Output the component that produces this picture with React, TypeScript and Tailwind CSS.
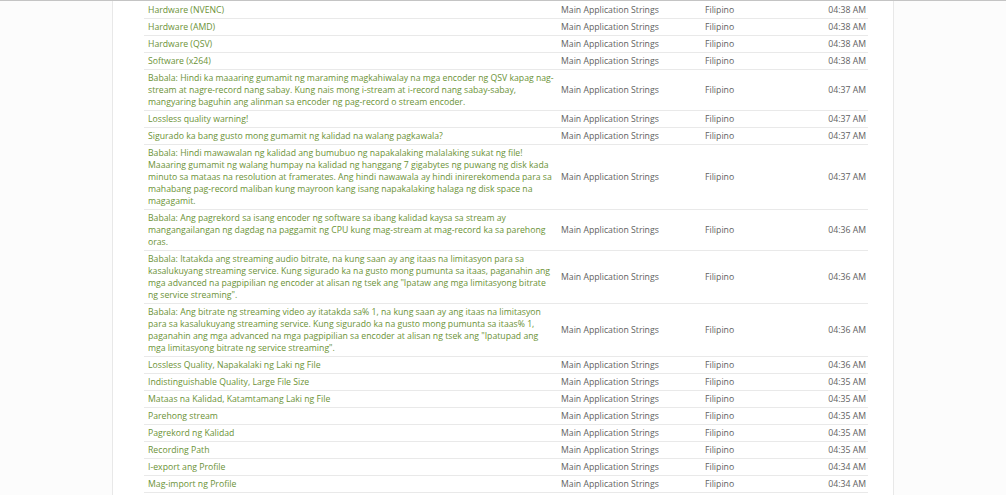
import { FC } from "react";

interface StringRow {
  text: string;
  time: string;
}

const rows: StringRow[] = [
  { text: "Hardware (NVENC)", time: "04:38 AM" },
  { text: "Hardware (AMD)", time: "04:38 AM" },
  { text: "Hardware (QSV)", time: "04:38 AM" },
  { text: "Software (x264)", time: "04:38 AM" },
  {
    text: "Babala: Hindi ka maaaring gumamit ng maraming magkahiwalay na mga encoder ng QSV kapag nag-stream at nagre-record nang sabay. Kung nais mong i-stream at i-record nang sabay-sabay, mangyaring baguhin ang alinman sa encoder ng pag-record o stream encoder.",
    time: "04:37 AM",
  },
  { text: "Lossless quality warning!", time: "04:37 AM" },
  {
    text: "Sigurado ka bang gusto mong gumamit ng kalidad na walang pagkawala?",
    time: "04:37 AM",
  },
  {
    text: "Babala: Hindi mawawalan ng kalidad ang bumubuo ng napakalaking malalaking sukat ng file! Maaaring gumamit ng walang humpay na kalidad ng hanggang 7 gigabytes ng puwang ng disk kada minuto sa mataas na resolution at framerates. Ang hindi nawawala ay hindi inirerekomenda para sa mahabang pag-record maliban kung mayroon kang isang napakalaking halaga ng disk space na magagamit.",
    time: "04:37 AM",
  },
  {
    text: "Babala: Ang pagrekord sa isang encoder ng software sa ibang kalidad kaysa sa stream ay mangangailangan ng dagdag na paggamit ng CPU kung mag-stream at mag-record ka sa parehong oras.",
    time: "04:36 AM",
  },
  {
    text: 'Babala: Itatakda ang streaming audio bitrate, na kung saan ay ang itaas na limitasyon para sa kasalukuyang streaming service. Kung sigurado ka na gusto mong pumunta sa itaas, paganahin ang mga advanced na pagpipilian ng encoder at alisan ng tsek ang "Ipataw ang mga limitasyong bitrate ng service streaming".',
    time: "04:36 AM",
  },
  {
    text: 'Babala: Ang bitrate ng streaming video ay itatakda sa% 1, na kung saan ay ang itaas na limitasyon para sa kasalukuyang streaming service. Kung sigurado ka na gusto mong pumunta sa itaas% 1, paganahin ang mga advanced na mga pagpipilian sa encoder at alisan ng tsek ang "Ipatupad ang mga limitasyong bitrate ng service streaming".',
    time: "04:36 AM",
  },
  { text: "Lossless Quality, Napakalaki ng Laki ng File", time: "04:36 AM" },
  { text: "Indistinguishable Quality, Large File Size", time: "04:35 AM" },
  { text: "Mataas na Kalidad, Katamtamang Laki ng File", time: "04:35 AM" },
  { text: "Parehong stream", time: "04:35 AM" },
  { text: "Pagrekord ng Kalidad", time: "04:35 AM" },
  { text: "Recording Path", time: "04:35 AM" },
  { text: "I-export ang Profile", time: "04:34 AM" },
  { text: "Mag-import ng Profile", time: "04:34 AM" },
];

const Row: FC<{ item: StringRow }> = ({ item }) => {
  return (
    <div className="grid grid-cols-[413px_144px_100px_67px] items-center border-b border-[#e9e9e9]">
      <div className="pl-[4px] pr-[2px] py-[2px] text-[#6b9236]">{item.text}</div>
      <div className="px-[4px] text-[#616161]">Main Application Strings</div>
      <div className="px-[4px] text-[#616161]">Filipino</div>
      <div className="pr-[2px] text-right text-[#616161]">{item.time}</div>
    </div>
  );
};

export default function App() {
  return (
    <div
      className="min-h-[495px] bg-[#fcfcfc] border-t border-[#c4c4c4] text-[8.7px] leading-[12px]"
      style={{ fontFamily: '"Open Sans", "Liberation Sans", sans-serif' }}
    >
      <div className="mx-auto w-[782px] min-h-[494px] bg-white border-x border-[#e8e8e8] pt-[1px] pl-[31px] pr-[25px]">
        {rows.map((item, i) => (
          <Row key={i} item={item} />
        ))}
      </div>
    </div>
  );
}
